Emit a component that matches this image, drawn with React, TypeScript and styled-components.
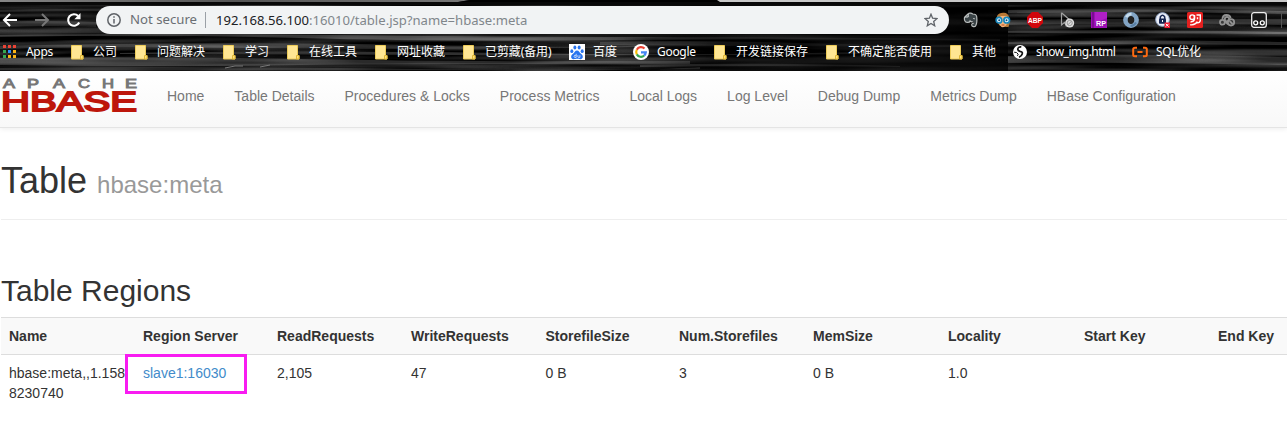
import React from 'react';
import styled, { createGlobalStyle } from 'styled-components';

const Global = createGlobalStyle`
  * { box-sizing: border-box; }
  body { margin: 0; background: #fff; overflow: hidden; font-family: "Liberation Sans", Arial, sans-serif; color: #333; }
`;

const Page = styled.div`
  width: 1287px;
  height: 430px;
  overflow: hidden;
`;

const Chrome = styled.header`
  position: relative;
  height: 71px;
  background: #000;
  overflow: hidden;
  font-family: "Noto Sans", "Noto Sans CJK SC", sans-serif;
`;

const Grain = styled.svg`
  position: absolute;
  inset: 0;
  display: block;
`;

const Toolbar = styled.div`
  position: relative;
  display: flex;
  align-items: center;
  height: 28px;
  margin-top: 6px;
`;

const NavButton = styled.span<{ $width: number }>`
  display: flex;
  flex: none;
  width: ${(p) => p.$width}px;
`;

const AddressBar = styled.div`
  display: flex;
  flex: none;
  align-items: center;
  width: 853px;
  height: 28px;
  padding: 0 11px;
  border-radius: 14px;
  background: #f1f3f4;
  color: #80868b;
  white-space: nowrap;
`;

const Security = styled.span`
  width: 76px;
  height: 16px;
  margin-left: 9px;
  border-right: 1px solid #9aa0a6;
  color: #6a6e73;
  font-size: 13.2px;
  line-height: 15px;
`;

const Url = styled.span`
  flex: 1;
  margin-left: 10px;
  font-size: 13.1px;
  line-height: 16px;
  b { font-weight: 400; color: #202124; }
`;

const Extensions = styled.div`
  display: flex;
  gap: 16px;
  margin-left: 14px;
  padding-right: 14px;
  border-right: 1px solid #555;
  svg { display: block; overflow: visible; }
`;

const Bookmarks = styled.nav`
  position: relative;
  display: flex;
  align-items: center;
  height: 24px;
  margin-top: 6px;
  padding-left: 3px;
`;

const Bookmark = styled.span<{ $width: number; $tracking: number }>`
  display: flex;
  flex: none;
  align-items: center;
  width: ${(p) => p.$width}px;
  color: #fff;
  font-size: 12px;
  line-height: 16px;
  letter-spacing: ${(p) => p.$tracking}px;
  white-space: nowrap;
`;

const BookmarkIcon = styled.span<{ $width: number }>`
  display: flex;
  flex: none;
  width: ${(p) => p.$width}px;
`;

const SiteNav = styled.nav`
  display: flex;
  height: 57px;
  background: linear-gradient(#fff, #f8f8f8);
  border-bottom: 1px solid #e4e4e4;
  box-shadow: 0 1px 5px rgba(0, 0, 0, 0.075);
`;

const Brand = styled.a`
  width: 152px;
  height: 45px;
  svg { display: block; overflow: visible; }
`;

const NavLink = styled.a`
  padding: 15px 15px 0;
  font-size: 14px;
  line-height: 20px;
  color: #777;
  white-space: nowrap;
`;

const Content = styled.main`
  padding-left: 1px;
`;

const PageHeader = styled.div`
  height: 92px;
  padding-top: 33px;
  border-bottom: 1px solid #eee;
`;

const Title = styled.h1`
  margin: 0;
  font-size: 36px;
  font-weight: 400;
  line-height: 40px;
  small { font-size: 24px; color: #999; }
`;

const SectionTitle = styled.h2`
  margin: 54px 0 10px;
  font-size: 30px;
  font-weight: 400;
  line-height: 33px;
`;

const Row = styled.div<{ $head?: boolean }>`
  display: grid;
  grid-template-columns: 134px 134px 134px 134.5px 133.5px 134px 135px 136px 134px 78px;
  height: ${(p) => (p.$head ? 37 : 76)}px;
  border-top: 1px solid #ddd;
  background: ${(p) => (p.$head ? '#f9f9f9' : '#fff')};
  font-weight: ${(p) => (p.$head ? 700 : 400)};
`;

const Cell = styled.div`
  padding: 8px 0 0 8px;
  font-size: 14px;
  line-height: 20px;
  white-space: nowrap;
`;

const Highlight = styled.div`
  width: 122px;
  height: 40px;
  margin: -9px 0 0 -18px;
  padding: 6px 0 0 15px;
  border: 3px solid #f81cf1;
  color: #428bca;
`;

const streaks: [string, string][] = [
  ['M0 10Q120 7 260 10T620 9V11Q400 14 250 12T0 12z', '#303030'],
  ['M0 22Q40 20 96 22V27Q50 25 0 27z', '#3a3a3a'],
  ['M0 35Q150 33 330 35T640 37T1000 39V41Q800 38 620 40T300 38T0 37z', '#666'],
  ['M0 46Q200 41 420 45T640 44V47Q420 50 250 48T0 49z', '#555'],
  ['M120 53Q300 50 500 53T860 52V54Q600 56 450 55T120 54z', '#6d6d6d'],
  ['M0 58Q140 56 300 59T690 61V65Q450 63 300 65T0 65z', '#5e5e5e'],
  ['M600 42Q700 40 800 43T950 45V47Q780 46 600 45z', '#444'],
  ['M640 65Q760 62 900 66V67Q770 65 640 67z', '#666'],
  ['M0 68Q200 66 420 69T700 67V69Q400 71 0 70z', '#555'],
  ['M1008 10Q1100 8 1287 11V14Q1150 11 1008 13z', '#585858'],
  ['M1008 20Q1100 18 1287 19V25Q1150 22 1008 25z', '#454545'],
  ['M1008 31Q1130 29 1287 32V34Q1150 33 1008 33z', '#5c5c5c'],
  ['M1008 42Q1120 39 1287 42V45Q1150 44 1008 44z', '#555'],
  ['M1008 56Q1110 53 1287 57V65Q1150 62 1008 63z', '#5a5a5a'],
];

const Wood = () => (
  <Grain width="1287" height="71" viewBox="0 0 1287 71">
    <defs>
      <linearGradient id="tabstrip">
        <stop stopColor="#858585" /><stop offset=".5" stopColor="#555" /><stop offset="1" stopColor="#777" />
      </linearGradient>
      <linearGradient id="shade">
        <stop stopColor="#000" stopOpacity="0" /><stop offset=".4" stopColor="#000" stopOpacity=".45" /><stop offset="1" stopColor="#000" stopOpacity=".75" />
      </linearGradient>
      <filter id="fibres" x="0" y="0" width="100%" height="100%" colorInterpolationFilters="sRGB">
        <feTurbulence type="fractalNoise" baseFrequency=".006 .14" numOctaves="2" seed="8" />
        <feColorMatrix values="1.1 0 0 0 -.4  1.1 0 0 0 -.4  1.1 0 0 0 -.4  0 0 0 0 1" />
      </filter>
    </defs>
    {streaks.map(([d, fill]) => <path key={d} d={d} fill={fill} />)}
    <rect width="1287" height="71" filter="url(#fibres)" opacity=".55" />
    <rect x="600" y="2" width="408" height="69" fill="url(#shade)" />
    <path d="M0 0H470L458 2H0Z" fill="url(#tabstrip)" />
    <path d="M470 0H717L720 2H458z" fill="#000" />
    <path d="M717 0H1287V2H720Z" fill="#c8c8c8" />
    <path d="M0 2H1287V5H0z" fill="#080808" />
    <path d="M225 68L235 66H243M260 67L270 65" stroke="#777" fill="none" />
  </Grain>
);

const Folder = () => (
  <svg width="13" height="15" viewBox="0 0 13 15">
    <path d="M.5.5h10v10h1.5v3.5H.5z" fill="#ffe693" stroke="#edcb58" />
    <path d="M9.5 14v-3.5H12V14z" fill="#ffe27b" stroke="#dfb637" />
  </svg>
);

const appColors = ['#ea4335', '#ea4335', '#ea4335', '#34a853', '#2b8cff', '#fbb416', '#34a853', '#fbb416', '#fbb416'];

const AppsIcon = () => (
  <svg width="14" height="14" viewBox="0 0 14 14">
    {appColors.map((c, i) => (
      <rect key={i} x={(i % 3) * 5} y={Math.floor(i / 3) * 5} width="3" height="3" fill={c} />
    ))}
  </svg>
);

const Baidu = () => (
  <svg width="16" height="16" viewBox="0 0 16 16">
    <path fill="#fff" d="M0 0h16v16H0z" />
    <g fill="#2874ef">
      <ellipse cx="2.8" cy="7.2" rx="1.5" ry="1.9" /><ellipse cx="5.9" cy="3.5" rx="1.5" ry="2.1" />
      <ellipse cx="10.1" cy="3.5" rx="1.5" ry="2.1" /><ellipse cx="13.2" cy="7.2" rx="1.5" ry="1.9" />
      <path d="M8 6.5C6 6.5 5.6 8.7 3.7 10.1 1.2 12 2 15 4.3 15.2 6 15.3 6.7 14.8 8 14.8s2 .5 3.7.4c2.3-.2 3.1-3.2.6-5.1C10.4 8.7 10 6.5 8 6.5z" />
    </g>
    <path d="M7.2 9.8v3.6H5.6q-1-.9 0-2h1.2M8.9 11.2v1.7q.2.6 1 .5h1V11.2" fill="none" stroke="#fff" strokeWidth=".7" />
  </svg>
);

const Google = () => (
  <svg width="16" height="16" viewBox="0 0 16 16">
    <circle cx="8" cy="8" r="8" fill="#fff" />
    <g fill="none" strokeWidth="2.2">
      <path d="M11.5 4.6A4.8 4.8 0 0 0 3.8 5.7" stroke="#ea4335" />
      <path d="M3.8 5.7a4.8 4.8 0 0 0 0 4.7" stroke="#fbbc05" />
      <path d="M3.8 10.4a4.8 4.8 0 0 0 7.4 1.1" stroke="#34a853" />
      <path d="M11.2 11.5A4.8 4.8 0 0 0 12.8 8.4H8" stroke="#4285f4" />
    </g>
  </svg>
);

const Globe = () => (
  <svg width="14" height="14" viewBox="0 0 14 14">
    <circle cx="7" cy="7" r="7" fill="#fff" />
    <path d="M8.3 1.8C6.2 1.6 4.7 2.8 4.8 4.4c.1 1.3 1 1.6 2.2 2 1.7.4 2.7 1 2.3 2.3-.4 1.5-1.5 2.7-3.3 3.5" fill="none" stroke="#111" strokeWidth="1.7" />
    <path d="M1.2 7.2l2.4.4 1.6 1.6-.8 1.7" fill="none" stroke="#111" strokeWidth="1" />
  </svg>
);

const SqlMark = () => (
  <svg width="16" height="12" viewBox="0 0 16 12">
    <path d="M5 1.8H3q-1.8 0-1.8 1.5v5.4q0 1.5 1.8 1.5h2M11 1.8h2q1.8 0 1.8 1.5v5.4q0 1.5-1.8 1.5h-2M5.5 6h5" fill="none" stroke="#ff6a10" strokeWidth="2" />
  </svg>
);

const ExtensionIcons = () => (
  <Extensions>
    <svg width="16" height="16" viewBox="0 0 16 16">
      <path d="M5.2 1.7c1-1 3.4-.7 4.4.3 3 0 3.9.8 4.1 2.8.4 3.6-.1 7.4-1 9-.8 1.4-4 1.1-4-.9 0-1.2.9-1.7 2-1.6M5.2 1.7 1.5 5.3c-.6 2.5.5 5 2.6 5.1 1.7.2 2.7-.3 3-1.4.8.8 1.8.9 2.7.7" fill="#3b4447" stroke="#b9bdbd" strokeWidth="1.2" />
      <path d="M5.2 2v3H2M10.3 6.6q.8-.6 1.5.4" stroke="#d6d9d9" fill="none" />
    </svg>
    <svg width="16" height="16" viewBox="0 0 16 16">
      <path d="M2 4Q4 .5 9 .8q4 .2 5 4.2l1 4-1.5 6H11L5 14 1.5 9z" fill="#b97936" />
      <path d="M3.5 6 6 4h6l.5 7q-2.5 5-6 4L3.5 11z" fill="#f4b57e" />
      <g fill="#e9faff" stroke="#1687bd" strokeWidth="1.7"><circle cx="4" cy="8.2" r="2.8" /><circle cx="11.7" cy="8.2" r="2.8" /></g>
      <circle cx="4.2" cy="8.2" r="1" fill="#164c79" /><circle cx="11.5" cy="8.2" r="1" fill="#164c79" />
      <path d="M6.5 13h3" stroke="#b34924" />
    </svg>
    <svg width="16" height="16" viewBox="0 0 16 16">
      <path d="M5 0h6l5 5v6l-5 5H5l-5-5V5z" fill="#d0060c" />
      <text x="1" y="11" textLength="14" lengthAdjust="spacingAndGlyphs" fontFamily="Liberation Sans" fontWeight="700" fontSize="8" fill="#fff">ABP</text>
    </svg>
    <svg width="16" height="16" viewBox="0 0 16 16">
      <path d="M2.5.8V13l3-2.5 2 4M2.5.8 12 9" fill="none" stroke="#a0a0a0" strokeWidth="1.2" />
      <circle cx="10.7" cy="11" r="4.5" fill="#ddd" /><circle cx="10.7" cy="11" r="2.6" fill="none" stroke="#999" /><path d="m8.9 12.8 3.6-3.6" stroke="#999" />
    </svg>
    <svg width="16" height="16" viewBox="0 0 16 16">
      <path d="M0 0h16v16H0z" fill="#9b10b4" /><path d="M1.5 0h1v16h-1z" fill="#5c0870" /><path d="M4 0h12v6L4 11z" fill="#b01fc6" />
      <text x="5" y="14" textLength="10" lengthAdjust="spacingAndGlyphs" fontFamily="Liberation Sans" fontWeight="700" fontSize="8" fill="#fff">RP</text>
    </svg>
    <svg width="16" height="16" viewBox="0 0 16 16">
      <circle cx="8" cy="8" r="5.6" fill="none" stroke="#83a5c5" strokeWidth="4.6" />
      <path d="M3.2 5.2Q5 2 8.5 2" fill="none" stroke="#c6dbeb" strokeWidth="2.6" /><path d="M13 10.5Q11 14 7.5 14" fill="none" stroke="#587fa4" strokeWidth="2" />
      <ellipse cx="8" cy="8" rx="2.8" ry="4" fill="#222" />
    </svg>
    <svg width="16" height="16" viewBox="0 0 16 16">
      <circle cx="7.5" cy="7.5" r="6.8" fill="#e9edf7" stroke="#9fb2d3" />
      <path d="M5.3 7V5q2.2-3.6 4.4 0v2" fill="none" stroke="#172651" strokeWidth="1.5" /><rect x="4" y="6.5" width="7" height="5.2" rx=".8" fill="#172651" /><path d="M7.5 8v2" stroke="#fff" />
      <path d="M9.5 10.5H15V16H9.5z" fill="#f01830" /><path d="m10.8 11.8 2.8 2.8m0-2.8-2.8 2.8" stroke="#fff" />
    </svg>
    <svg width="16" height="16" viewBox="0 0 16 16">
      <rect width="16" height="16" rx="1.6" fill="#e5201f" />
      <g fill="none" stroke="#fff" strokeWidth="1.4">
        <circle cx="5.2" cy="5.2" r="2.3" /><path d="M7.5 3v4.2Q7 9.8 3.5 10M9.5 3h3.8v5.5q-.3 2.6-3.2 2.4M10.5 5.3v2M3.2 12.7q5 .8 7.2-3" />
      </g>
    </svg>
    <svg width="16" height="16" viewBox="0 0 16 16" fill="none" stroke="#929292" strokeWidth="1.8">
      <circle cx="3.4" cy="10.3" r="2.4" /><path d="M3.4 7.4Q3.6 3 7.4 3q3.8 0 4.2 3.2" /><circle cx="8" cy="7.2" r="2.2" />
      <circle cx="12" cy="10.3" r="3.2" /><path d="m6.4 9.2 2.5 3.2M10.6 9l3 3" />
    </svg>
    <svg width="16" height="16" viewBox="0 0 16 16">
      <rect x=".7" y=".7" width="14.6" height="14.6" rx="2.3" fill="#181818" stroke="#eee" strokeWidth="1.3" />
      <g fill="none" stroke="#fff" strokeWidth="1.3"><circle cx="4.7" cy="10.8" r="2" /><circle cx="11.3" cy="10.8" r="2" /></g>
    </svg>
  </Extensions>
);

type BookmarkItem = { label: string; width: number; iconWidth: number; icon: React.ReactNode; tracking?: number };

const bookmarks: BookmarkItem[] = [
  { label: 'Apps', width: 68, iconWidth: 23, icon: <AppsIcon />, tracking: -0.3 },
  { label: '公司', width: 64, iconWidth: 22, icon: <Folder /> },
  { label: '问题解决', width: 88, iconWidth: 22, icon: <Folder /> },
  { label: '学习', width: 64, iconWidth: 22, icon: <Folder /> },
  { label: '在线工具', width: 88, iconWidth: 22, icon: <Folder /> },
  { label: '网址收藏', width: 88, iconWidth: 22, icon: <Folder /> },
  { label: '已剪藏(备用)', width: 106, iconWidth: 22, icon: <Folder />, tracking: -0.1 },
  { label: '百度', width: 64, iconWidth: 24, icon: <Baidu /> },
  { label: 'Google', width: 81, iconWidth: 24, icon: <Google />, tracking: -0.3 },
  { label: '开发链接保存', width: 112, iconWidth: 22, icon: <Folder /> },
  { label: '不确定能否使用', width: 124, iconWidth: 22, icon: <Folder /> },
  { label: '其他', width: 63, iconWidth: 22, icon: <Folder /> },
  { label: 'show_img.html', width: 119, iconWidth: 23, icon: <Globe />, tracking: -0.5 },
  { label: 'SQL优化', width: 90, iconWidth: 24, icon: <SqlMark />, tracking: -0.3 },
];

const brandLetters: [string, number][] = [['A', 3], ['P', 27], ['A', 53], ['C', 78], ['H', 102], ['E', 125]];

const links = ['Home', 'Table Details', 'Procedures & Locks', 'Process Metrics', 'Local Logs', 'Log Level', 'Debug Dump', 'Metrics Dump', 'HBase Configuration'];
const columns = ['Name', 'Region Server', 'ReadRequests', 'WriteRequests', 'StorefileSize', 'Num.Storefiles', 'MemSize', 'Locality', 'Start Key', 'End Key'];

export default function App() {
  return (
    <Page>
      <Global />
      <Chrome>
        <Wood />
        <Toolbar>
          <NavButton $width={32}>
            <svg width="18" height="16" viewBox="0 0 18 16" fill="none" stroke="#fff" strokeWidth="2"><path d="M17 8H4M10 2L4 8l6 6" /></svg>
          </NavButton>
          <NavButton $width={33}>
            <svg width="18" height="16" viewBox="0 0 18 16" fill="none" stroke="#777" strokeWidth="2"><path d="M3 8h13M10 2l6 6-6 6" /></svg>
          </NavButton>
          <NavButton $width={31}>
            <svg width="18" height="16" viewBox="0 0 18 16"><path d="M14.2 10.5A5.8 5.8 0 1 1 13.2 4" fill="none" stroke="#fff" strokeWidth="2.1" /><path d="M15.5 1v6.2H9.3z" fill="#fff" /></svg>
          </NavButton>
          <AddressBar>
            <svg width="14" height="14" viewBox="0 0 14 14"><circle cx="7" cy="7" r="6.2" fill="none" stroke="#5f6368" strokeWidth="1.5" /><path d="M7 6v4.5M7 3.2v1.5" stroke="#5f6368" strokeWidth="1.5" /></svg>
            <Security>Not secure</Security>
            <Url><b>192.168.56.100</b>:16010/table.jsp?name=hbase:meta</Url>
            <svg width="14" height="14" viewBox="0 0 14 14"><path d="m7 1.2 1.6 4 4.4.4-3.3 2.8 1 4.4L7 10.5l-3.7 2.3 1-4.4L1 5.6l4.4-.4z" fill="none" stroke="#5f6368" strokeWidth="1.3" /></svg>
          </AddressBar>
          <ExtensionIcons />
        </Toolbar>
        <Bookmarks>
          {bookmarks.map(({ label, width, iconWidth, icon, tracking = 0 }) => (
            <Bookmark key={label} $width={width} $tracking={tracking}>
              <BookmarkIcon $width={iconWidth}>{icon}</BookmarkIcon>{label}
            </Bookmark>
          ))}
        </Bookmarks>
      </Chrome>
      <SiteNav>
        <Brand>
          <svg width="150" height="45" viewBox="0 0 150 45" fontFamily="Liberation Sans">
            <g fill="#777" stroke="#777" strokeWidth=".9" fontSize="12.5">
              {brandLetters.map(([letter, x]) => (
                <text key={x} x={x} y="17" textLength="12" lengthAdjust="spacingAndGlyphs">{letter}</text>
              ))}
            </g>
            <text x="1" y="40" textLength="136" lengthAdjust="spacingAndGlyphs" fontSize="27" fill="#bd160b" stroke="#bd160b" strokeWidth="1.8">HBASE</text>
          </svg>
        </Brand>
        {links.map((link) => <NavLink key={link}>{link}</NavLink>)}
      </SiteNav>
      <Content>
        <PageHeader><Title>Table <small>hbase:meta</small></Title></PageHeader>
        <SectionTitle>Table Regions</SectionTitle>
        <Row $head>{columns.map((name) => <Cell key={name}>{name}</Cell>)}</Row>
        <Row>
          <Cell>hbase:meta,,1.158<br />8230740</Cell>
          <Cell><Highlight>slave1:16030</Highlight></Cell>
          <Cell>2,105</Cell><Cell>47</Cell><Cell>0 B</Cell><Cell>3</Cell><Cell>0 B</Cell><Cell>1.0</Cell><Cell /><Cell />
        </Row>
      </Content>
    </Page>
  );
}
